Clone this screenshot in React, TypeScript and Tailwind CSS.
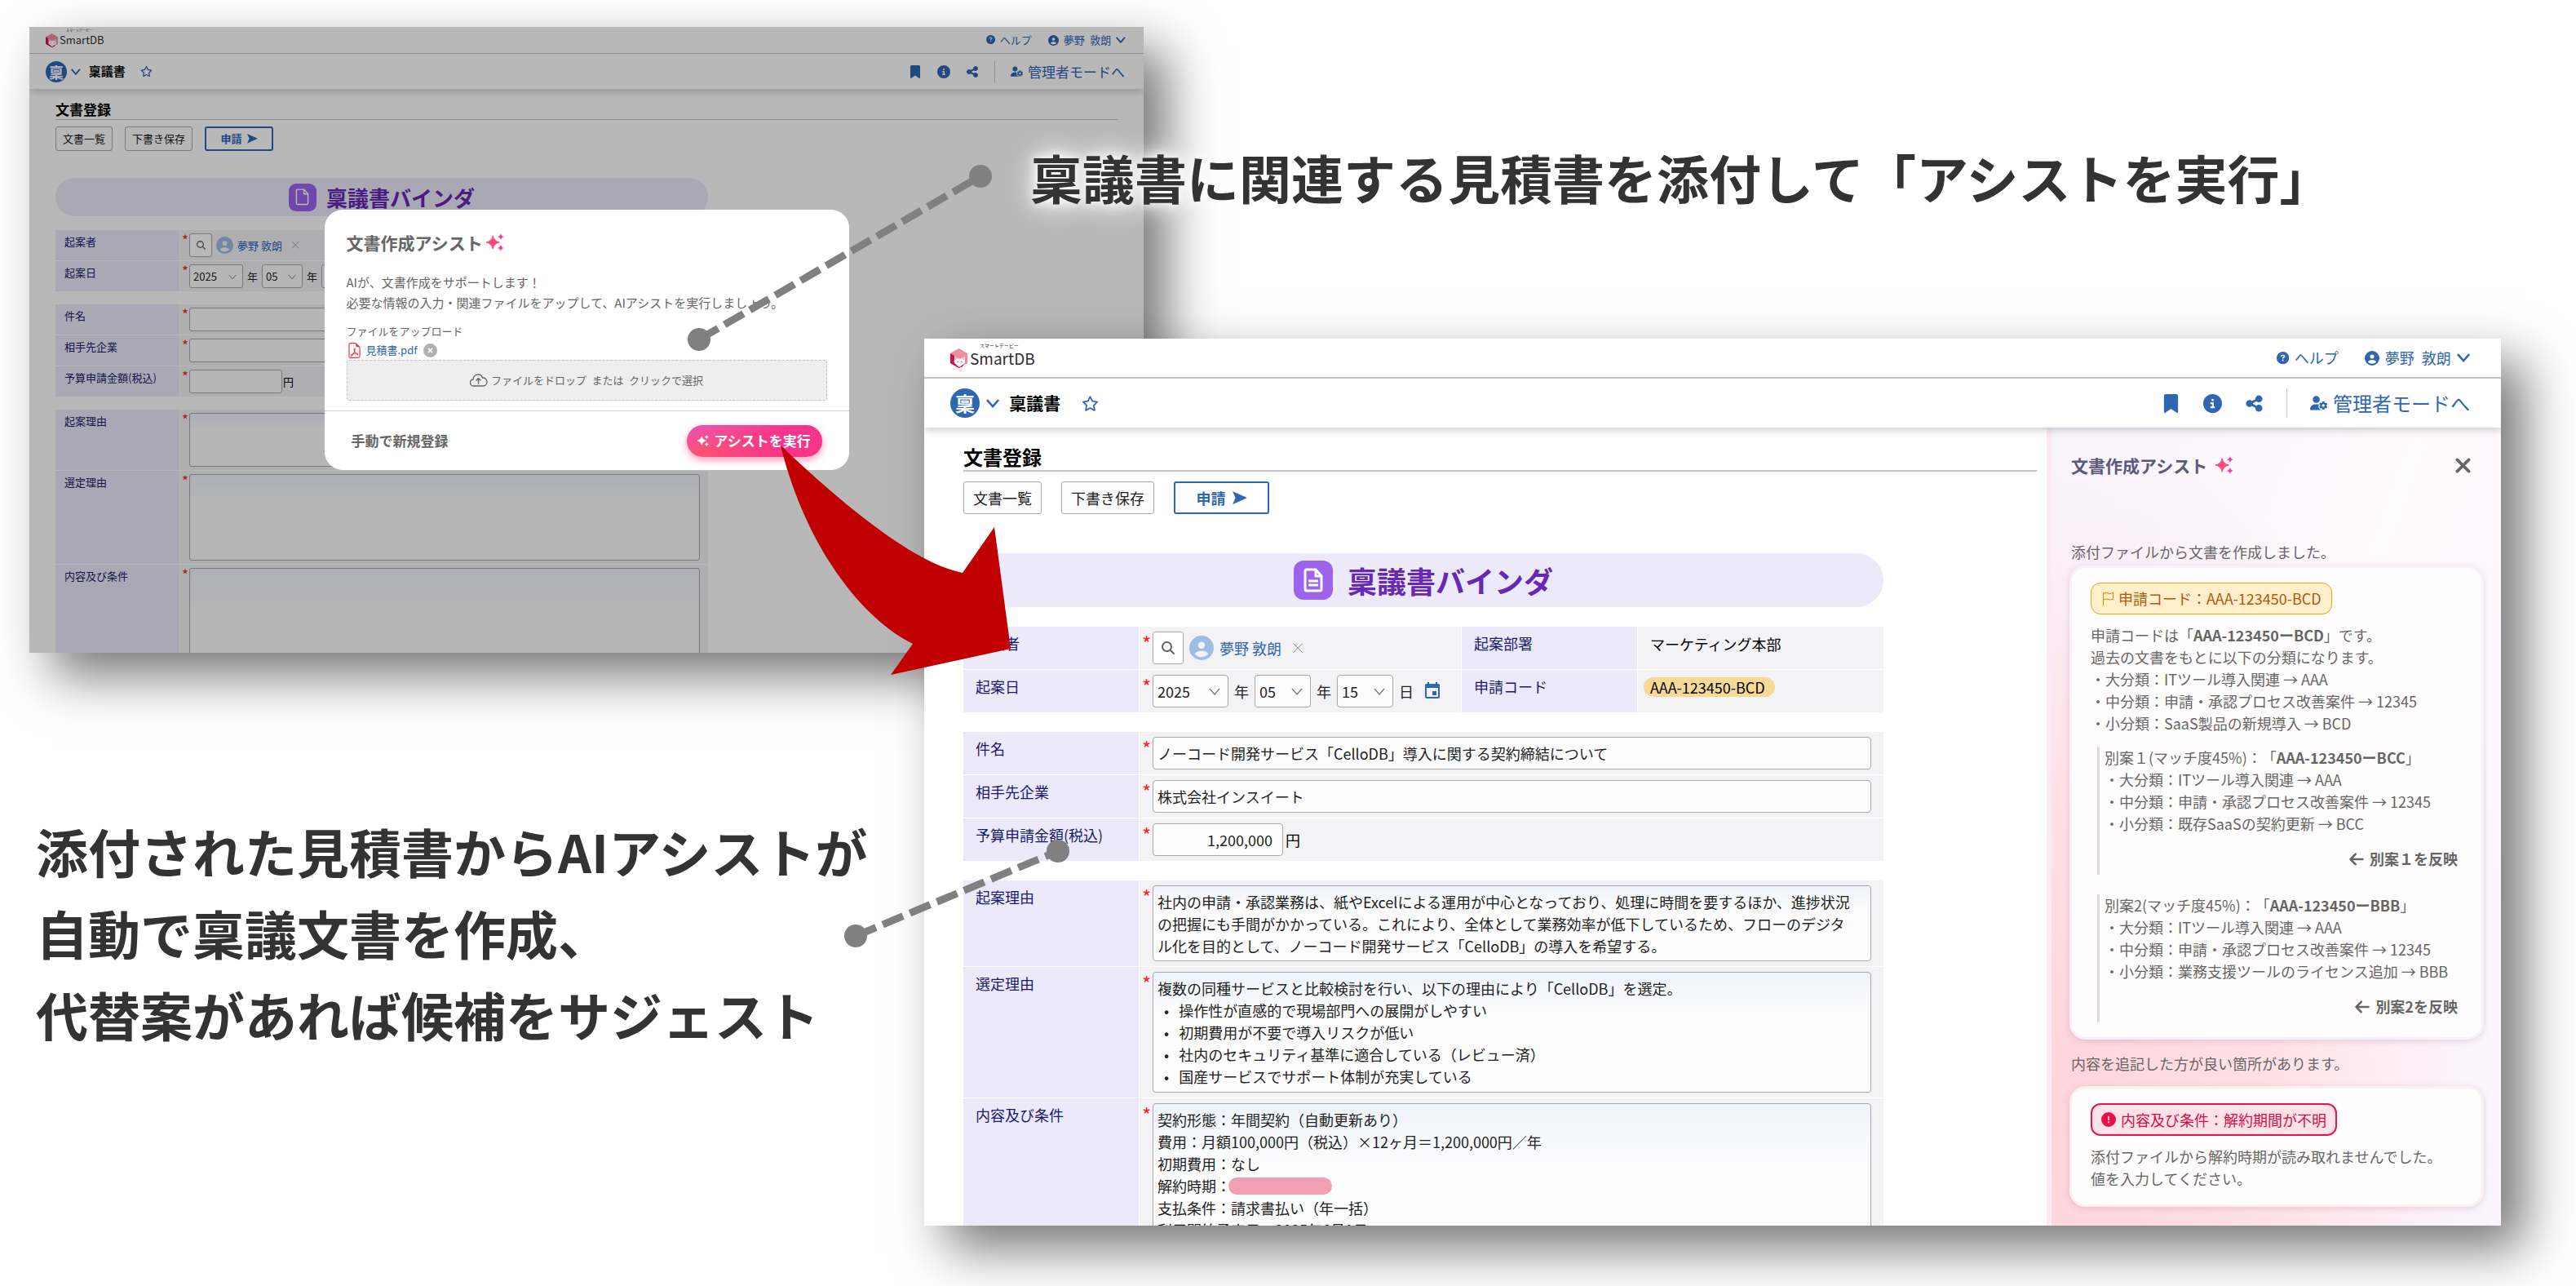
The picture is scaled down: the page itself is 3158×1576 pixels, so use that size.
import type { ReactNode } from "react";
import { clsx } from "clsx";
import { BsFileEarmarkPdf, BsFlag } from "react-icons/bs";
import {
  FaArrowLeft,
  FaBookmark,
  FaCircleExclamation,
  FaCircleInfo,
  FaCircleQuestion,
  FaCircleUser,
  FaCircleXmark,
  FaMagnifyingGlass,
  FaRegStar,
  FaShareNodes,
  FaUserGear,
} from "react-icons/fa6";
import { MdEvent } from "react-icons/md";

type Size = "sm" | "lg";

const sizes = {
  sm: {
    topBar: "h-[33px] border-b-1 pl-5 pr-[22px]",
    mark: "h-[17px] w-[15px]",
    ruby: "left-2 -top-1 text-[4px]",
    brand: "ml-0.5 text-[13px] leading-5",
    topLinks: "gap-5 text-[13px]",
    topLink: "gap-1.5",
    subBar: "h-[43px] pl-5 pr-[23px]",
    badge: "h-[26px] w-[26px] text-[18px]",
    binderMenu: "ml-[5px] text-[13px]",
    binderName: "ml-2.5 text-[15px]",
    star: "ml-[18px] text-[15px]",
    tools: "gap-[19px] text-base",
    divider: "h-[26px]",
    admin: "gap-1.5 text-[17px]",
    main: "pl-8 pr-[31px]",
    title: "pt-[13px] text-[17px] leading-6 border-b-1",
    actions: "mt-2 gap-[15px] text-[13px]",
    button: "h-[30px] px-2",
    submit: "h-[30px] w-[84px] gap-1.5",
    banner: "mt-[33px] h-[47px] gap-3 text-[26px]",
    bannerIcon: "h-[34px] w-[34px] rounded-[9px]",
    form: "w-[800px] text-[13px]",
    fourCols: "grid-cols-[152px_279px_152px_1fr]",
    twoCols: "grid-cols-[152px_1fr]",
    firstSection: "mt-[17px]",
    section: "mt-4",
    row: "min-h-[37px]",
    label: "px-[11px] py-1 leading-5",
    field: "gap-[5px] py-1 pl-[11px] pr-[10px]",
    required: "left-0.5 top-1 text-[17px] leading-4",
    text: "px-1.5 leading-5 pt-[13px]",
    control: "h-[29px] rounded-[3px] px-1",
    area: "rounded-[3px] p-1 leading-5",
    search: "h-[29px] w-[28px] text-[11px]",
    avatar: "text-[21px]",
    year: "w-[66px]",
    day: "w-[50px]",
    chevron: "right-2 h-2.5 w-2.5",
    calendar: "text-[18px]",
    amount: "w-[114px]",
  },
  lg: {
    topBar: "h-[49px] border-b-2 pl-8 pr-[38px]",
    mark: "h-6 w-[21px]",
    ruby: "left-3 -top-1.5 text-[6px]",
    brand: "ml-[3px] text-[19px] leading-6",
    topLinks: "gap-8 text-[18px]",
    topLink: "gap-[7px]",
    subBar: "h-[60px] pl-8 pr-[38px]",
    badge: "h-9 w-9 text-2xl",
    binderMenu: "ml-2 text-[18px]",
    binderName: "ml-3 text-[21px]",
    star: "ml-[26px] text-[21px]",
    tools: "gap-7 text-[23px]",
    divider: "h-9",
    admin: "gap-1.5 text-2xl",
    main: "pl-12 pr-3",
    title: "pt-5 text-2xl leading-8 border-b-2",
    actions: "mt-3 gap-6 text-[18px]",
    button: "h-10 px-[11px]",
    submit: "h-10 w-[117px] gap-2",
    banner: "mt-12 h-[66px] gap-[18px] text-4xl",
    bannerIcon: "h-12 w-12 rounded-xl",
    form: "w-[1128px] text-[18px]",
    fourCols: "grid-cols-[215px_394px_215px_1fr]",
    twoCols: "grid-cols-[215px_1fr]",
    firstSection: "mt-6",
    section: "mt-6",
    row: "min-h-[52px]",
    label: "px-[15px] py-[7px] leading-[27px]",
    field: "gap-[7px] py-1.5 pl-4 pr-[15px]",
    required: "left-[3px] top-2 text-[24px] leading-6",
    text: "pl-[15px] pt-2 leading-[27px]",
    control: "h-10 rounded-[4px] px-[5px]",
    area: "rounded-[4px] pl-[5px] pr-4 py-1.5 leading-[27px]",
    search: "h-10 w-[38px] text-base",
    avatar: "text-[30px]",
    year: "w-[93px]",
    day: "w-[69px]",
    chevron: "right-2.5 h-3.5 w-3.5",
    calendar: "text-2xl",
    amount: "w-[160px]",
  },
};

interface FormValues {
  subject: string;
  company: string;
  amount: string;
  reason: string;
  selection: string;
  terms: string;
}

const emptyForm: FormValues = { subject: "", company: "", amount: "", reason: "", selection: "", terms: "" };

const filledForm: FormValues = {
  subject: "ノーコード開発サービス「CelloDB」導入に関する契約締結について",
  company: "株式会社インスイート",
  amount: "1,200,000",
  reason:
    "社内の申請・承認業務は、紙やExcelによる運用が中心となっており、処理に時間を要するほか、進捗状況の把握にも手間がかかっている。これにより、全体として業務効率が低下しているため、フローのデジタル化を目的として、ノーコード開発サービス「CelloDB」の導入を希望する。",
  selection: [
    "複数の同種サービスと比較検討を行い、以下の理由により「CelloDB」を選定。",
    "  •   操作性が直感的で現場部門への展開がしやすい",
    "  •   初期費用が不要で導入リスクが低い",
    "  •   社内のセキュリティ基準に適合している（レビュー済）",
    "  •   国産サービスでサポート体制が充実している",
  ].join("\n"),
  terms: [
    "契約形態：年間契約（自動更新あり）",
    "費用：月額100,000円（税込）×12ヶ月＝1,200,000円／年",
    "初期費用：なし",
    "解約時期：",
    "支払条件：請求書払い（年一括）",
    "利用開始予定日：2025年6月1日",
  ].join("\n"),
};

function Sparkle({ className, plain }: { className: string; plain?: boolean }) {
  return (
    <svg viewBox="0 0 24 24" className={className} aria-hidden="true">
      <path d="M9 3q1.500 7.500 9 9-7.500 1.500-9 9-1.500-7.500-9-9 7.500-1.500 9-9z" fill={plain ? "#fff" : "#fb4b78"} stroke={plain ? "#fff" : "#fb4b78"} strokeLinejoin="round" />
      <path d="M19.500 0q.7 3.800 4.500 4.500-3.800.7-4.500 4.500-.7-3.800-4.500-4.500 3.800-.7 4.500-4.500z" fill={plain ? "#fff" : "#f23f9d"} />
      <path d="M19.500 15q.7 3.800 4.500 4.500-3.800.7-4.500 4.500-.7-3.800-4.500-4.500 3.800-.7 4.500-4.500z" fill={plain ? "#fff" : "#f23f9d"} />
    </svg>
  );
}

function BrandMark({ className }: { className: string }) {
  return (
    <svg viewBox="0 0 21 24" className={className} aria-hidden="true">
      <path d="M10.500 0 21 6v12l-10.500 6L0 18V6z" fill="#f08ca0" />
      <path d="M0 6l5 3v5l-1 2 6.500 8L0 18z" fill="#d0104c" />
      <path d="M5 9l4 3.500h4L18 10v8l-7 5-6-5z" fill="#fff" />
      <path d="M5 9l4 3.500L6 15zM18 10l-1 4.500-3-2z" fill="#f7b6c2" />
      <path d="M6 19l5 4 6-4-2.500 3.500L10.500 24z" fill="#d0104c" />
      <circle cx="9" cy="16.500" r="0.700" fill="#d0104c" />
      <circle cx="14" cy="16.500" r="0.700" fill="#d0104c" />
    </svg>
  );
}

function Chevron() {
  return (
    <svg viewBox="0 0 16 16" className="h-[0.9em] w-[0.9em]" fill="none" stroke="currentColor" strokeWidth="2.500" aria-hidden="true">
      <path d="M1 4l7 8 7-8" />
    </svg>
  );
}

function Close({ className, strokeWidth = 3 }: { className: string; strokeWidth?: number }) {
  return (
    <svg viewBox="0 0 16 16" className={className} fill="none" stroke="currentColor" strokeWidth={strokeWidth} strokeLinecap="round" aria-hidden="true">
      <path d="M2 2l12 12M14 2 2 14" />
    </svg>
  );
}

function WindowHeader({ size }: { size: Size }) {
  const s = sizes[size];
  return (
    <header className="relative z-10 shrink-0 bg-white shadow-[0_3px_10px_rgba(0,0,0,0.2)]">
      <div className={clsx("flex items-center justify-between border-[#c2c2c2]", s.topBar)}>
        <a href="#home" className="flex items-center text-[#2e2e2e]">
          <BrandMark className={s.mark} />
          <span className={clsx("relative", s.brand)}>
            <span className={clsx("absolute whitespace-nowrap leading-none", s.ruby)}>スマートデービー</span>
            SmartDB
          </span>
        </a>
        <nav className={clsx("flex items-center text-[#2f66b3]", s.topLinks)}>
          <a href="#help" className={clsx("flex items-center", s.topLink)}>
            <FaCircleQuestion className="h-[0.85em] w-[0.85em]" />
            ヘルプ
          </a>
          <button type="button" className={clsx("flex items-center", s.topLink)}>
            <FaCircleUser />
            <span>夢野&ensp;敦朗</span>
            <Chevron />
          </button>
        </nav>
      </div>
      <div className={clsx("flex items-center", s.subBar)}>
        <span className={clsx("flex items-center justify-center rounded-full bg-[#2f66b3] font-bold leading-none text-white", s.badge)}>稟</span>
        <button type="button" aria-label="バインダメニュー" className={clsx("text-[#2f66b3]", s.binderMenu)}>
          <Chevron />
        </button>
        <span className={clsx("font-bold text-black", s.binderName)}>稟議書</span>
        <button type="button" aria-label="お気に入り" className={clsx("text-[#2f66b3]", s.star)}>
          <FaRegStar />
        </button>
        <div className={clsx("ml-auto flex items-center text-[#2f66b3]", s.tools)}>
          <button type="button" aria-label="ブックマーク"><FaBookmark /></button>
          <button type="button" aria-label="情報"><FaCircleInfo /></button>
          <button type="button" aria-label="共有"><FaShareNodes /></button>
          <span className={clsx("w-px bg-[#c8c8c8]", s.divider)} />
          <a href="#admin" className={clsx("flex items-center", s.admin)}>
            <FaUserGear className="h-[0.9em] w-[0.9em]" />
            管理者モードへ
          </a>
        </div>
      </div>
    </header>
  );
}

function Label({ size, htmlFor, children }: { size: Size; htmlFor?: string; children: ReactNode }) {
  const className = clsx("block bg-[#ebe9fa] text-[#1b1a6d]", sizes[size].label);
  return htmlFor ? <label htmlFor={htmlFor} className={className}>{children}</label> : <div className={className}>{children}</div>;
}

function Field({ size, children }: { size: Size; children: ReactNode }) {
  const s = sizes[size];
  return (
    <div className={clsx("relative flex items-center bg-[#f3f3f6]", s.row, s.field)}>
      <span className={clsx("absolute text-[#f5222d]", s.required)}>*</span>
      {children}
    </div>
  );
}

function Select({ size, label, value, width }: { size: Size; label: string; value: string; width: string }) {
  const s = sizes[size];
  return (
    <span className={clsx("relative flex items-center", width)}>
      <select aria-label={label} defaultValue={value} className={clsx("w-full appearance-none border border-[#a8a8a8] bg-[#fcfcfd] text-[#222]", s.control)}>
        <option>{value}</option>
      </select>
      <svg viewBox="0 0 14 14" className={clsx("pointer-events-none absolute", s.chevron)} fill="none" stroke="#777" strokeWidth="1.300" aria-hidden="true">
        <path d="M1 4l6 7 6-7" />
      </svg>
    </span>
  );
}

function DocumentForm({ size, values }: { size: Size; values: FormValues }) {
  const s = sizes[size];
  const id = (name: string) => `${size}-${name}`;
  const control = "border border-[#a8a8a8] bg-[#fcfcfd] text-[#222]";
  const area = "block w-full resize-none overflow-hidden border border-[#a8a8a8] bg-linear-to-b from-[#eff3fb] to-[#fcfcfd] to-30% text-[#222]";

  return (
    <main className={clsx("min-w-0 flex-1", s.main)}>
      <h1 className={clsx("border-[#c6c6c6] font-bold text-black", s.title)}>文書登録</h1>
      <div className={clsx("flex text-[#222]", s.actions)}>
        <button type="button" className={clsx("rounded-[3px] border border-[#a8a8a8] bg-[#fcfcfd]", s.button)}>文書一覧</button>
        <button type="button" className={clsx("rounded-[3px] border border-[#a8a8a8] bg-[#fcfcfd]", s.button)}>下書き保存</button>
        <button type="button" className={clsx("flex items-center justify-center rounded-[3px] border-2 border-[#2f66b3] bg-white font-bold text-[#2f66b3]", s.submit)}>
          申請
          <svg viewBox="0 0 20 18" className="h-[0.9em] w-[1em]" fill="currentColor" aria-hidden="true">
            <path d="M0 0l20 9L0 18l4-9z" />
          </svg>
        </button>
      </div>

      <div className={s.form}>
        <div className={clsx("flex items-center justify-center rounded-full bg-[#ebe9fa] font-bold text-[#6728b4]", s.banner)}>
          <span className={clsx("flex items-center justify-center bg-[#9d63ea]", s.bannerIcon)}>
            <svg viewBox="0 0 24 30" className="h-2/3 w-1/2" fill="none" stroke="#fff" strokeWidth={size === "lg" ? 3 : 2} strokeLinejoin="round" aria-hidden="true">
              <path d="M4 2h11l7 8v16a2 2 0 0 1-2 2H4a2 2 0 0 1-2-2V4a2 2 0 0 1 2-2zM15 2v8h7" />
              {size === "lg" && <path d="M6 16h12M6 21h12" />}
            </svg>
          </span>
          稟議書バインダ
        </div>

        <section className={clsx("grid gap-px", s.fourCols, s.firstSection)}>
          <Label size={size}>起案者</Label>
          <Field size={size}>
            <button type="button" aria-label="ユーザー検索" className={clsx("flex items-center justify-center rounded-[3px] border border-[#a8a8a8] bg-white text-[#666]", s.search)}>
              <FaMagnifyingGlass />
            </button>
            <FaCircleUser className={clsx("text-[#9dbce6]", s.avatar)} />
            <a href="#user" className="text-[#2f66b3]">夢野 敦朗</a>
            <button type="button" aria-label="削除" className="px-1.5 text-[#777]">
              <Close className="h-[0.8em] w-[0.8em]" strokeWidth={1} />
            </button>
          </Field>
          <Label size={size}>起案部署</Label>
          <div className={clsx("bg-[#f3f3f6] text-black", s.text)}>マーケティング本部</div>

          <Label size={size}>起案日</Label>
          <Field size={size}>
            <Select size={size} label="年" value="2025" width={s.year} />
            年
            <Select size={size} label="月" value="05" width={s.day} />
            年
            <Select size={size} label="日" value="15" width={s.day} />
            日
            <button type="button" aria-label="カレンダー" className={clsx("pl-1 text-[#2f66b3]", s.calendar)}>
              <MdEvent />
            </button>
          </Field>
          <Label size={size}>申請コード</Label>
          <div className={clsx("bg-[#f3f3f6] text-black", s.text)}>
            {size === "lg" && <span className="-ml-2 inline-block rounded-full bg-[#f7da95] pl-2 pr-3 leading-6">AAA-123450-BCD</span>}
          </div>
        </section>

        <section className={clsx("grid gap-px", s.twoCols, s.section)}>
          <Label size={size} htmlFor={id("subject")}>件名</Label>
          <Field size={size}>
            <input id={id("subject")} type="text" defaultValue={values.subject} className={clsx("w-full", control, s.control)} />
          </Field>
          <Label size={size} htmlFor={id("company")}>相手先企業</Label>
          <Field size={size}>
            <input id={id("company")} type="text" defaultValue={values.company} className={clsx("w-full", control, s.control)} />
          </Field>
          <Label size={size} htmlFor={id("amount")}>予算申請金額(税込)</Label>
          <Field size={size}>
            <input id={id("amount")} type="text" defaultValue={values.amount} className={clsx("text-right", control, s.control, s.amount, size === "lg" && "pr-3")} />
            <span className="-ml-1 text-black">円</span>
          </Field>
        </section>

        <section className={clsx("grid gap-px", s.twoCols, s.section)}>
          <Label size={size} htmlFor={id("reason")}>起案理由</Label>
          <Field size={size}>
            <textarea id={id("reason")} defaultValue={values.reason} className={clsx(area, s.area, size === "lg" ? "h-[93px]" : "h-[66px]")} />
          </Field>
          <Label size={size} htmlFor={id("selection")}>選定理由</Label>
          <Field size={size}>
            <textarea id={id("selection")} defaultValue={values.selection} className={clsx(area, s.area, size === "lg" ? "h-[148px]" : "h-[106px]")} />
          </Field>
          <Label size={size} htmlFor={id("terms")}>内容及び条件</Label>
          <Field size={size}>
            <textarea id={id("terms")} defaultValue={values.terms} className={clsx(area, s.area, size === "lg" ? "h-[240px]" : "h-[160px]")} />
            {size === "lg" && <span className="absolute left-[109px] top-[97px] h-[21px] w-[127px] rounded-full bg-[#f19fb4]" />}
          </Field>
        </section>
      </div>
    </main>
  );
}

function AssistDialog() {
  return (
    <div className="absolute inset-0 z-20 flex items-center justify-center bg-black/28">
      <div role="dialog" aria-labelledby="assist-title" className="w-[643px] rounded-[22px] bg-white text-[#666]">
        <div className="px-[27px] pb-3 pt-6">
          <h2 id="assist-title" className="flex items-center gap-1 text-[21px] font-bold leading-8">
            文書作成アシスト
            <Sparkle className="h-[22px] w-[22px]" />
          </h2>
          <p className="mt-5 text-[15px] leading-[25px]">
            AIが、文書作成をサポートします！
            <br />
            必要な情報の入力・関連ファイルをアップして、AIアシストを実行しましょう。
          </p>
          <p className="mt-[13px] text-[13px] leading-5">ファイルをアップロード</p>
          <div className="mt-[3px] flex items-center text-[13px] leading-5">
            <BsFileEarmarkPdf className="h-[19px] w-[19px] text-[#ee3344]" />
            <a href="#file" className="ml-[5px] text-[#2f66b3]">見積書.pdf</a>
            <button type="button" aria-label="ファイルを削除" className="ml-2 text-[17px] text-[#b0b0b0]">
              <FaCircleXmark />
            </button>
          </div>
          <button type="button" className="mt-0.5 flex h-[50px] w-full items-center justify-center gap-1 rounded-[3px] border border-dashed border-[#c4c4c4] bg-[#eee] text-[13px]">
            <svg viewBox="0 0 22 16" className="h-4 w-[22px]" fill="none" stroke="currentColor" strokeWidth="1.400" strokeLinecap="round" strokeLinejoin="round" aria-hidden="true">
              <path d="M5 15a4 4 0 0 1-1-8C4 3 7 1 10 1c3.500 0 5 2 5.500 4 3-.5 5.500 2 5.500 5 0 2.800-2 5-5 5zM10.500 12V6M8 8l2.500-2.500L13 8" />
            </svg>
            ファイルをドロップ&ensp;または&ensp;クリックで選択
          </button>
        </div>
        <div className="flex h-[73px] items-center justify-between border-t border-[#d4d4d4] px-[33px]">
          <button type="button" className="text-[17px] font-bold">手動で新規登録</button>
          <button
            type="button"
            className="flex h-[39px] w-[166px] items-center justify-center gap-1.5 rounded-full bg-[linear-gradient(165deg,#ea4fb8_0%,transparent_45%),linear-gradient(75deg,#fb5870_0%,#f8338a_70%)] text-[17px] font-bold text-white shadow-[0_4px_8px_rgba(250,60,120,0.5)]"
          >
            <Sparkle className="h-3.5 w-3.5" plain />
            アシストを実行
          </button>
        </div>
      </div>
    </div>
  );
}

interface Alternative {
  title: string;
  code: string;
  items: string[];
  action: string;
}

const alternatives: Alternative[] = [
  {
    title: "別案１(マッチ度45%)：",
    code: "AAA-123450ーBCC",
    items: ["大分類：ITツール導入関連 → AAA", "中分類：申請・承認プロセス改善案件 → 12345", "小分類：既存SaaSの契約更新 → BCC"],
    action: "別案１を反映",
  },
  {
    title: "別案2(マッチ度45%)：",
    code: "AAA-123450ーBBB",
    items: ["大分類：ITツール導入関連 → AAA", "中分類：申請・承認プロセス改善案件 → 12345", "小分類：業務支援ツールのライセンス追加 → BBB"],
    action: "別案2を反映",
  },
];

function AssistPanel() {
  const card = "rounded-[20px] border-3 px-[23px] pb-[18px] pt-[18px] bg-[#fffdfd] shadow-[0_2px_8px_rgba(120,60,90,0.18)]";
  return (
    <aside className="w-[557px] shrink-0 border-l-6 border-[#fbeaf5] bg-[radial-gradient(ellipse_at_0%_88%,#ffd3dc_0%,#ffe1e8_35%,transparent_70%),linear-gradient(110deg,#f8f5ff_0%,#fffafb_50%,#faf5ff_100%)] pl-[22px] pr-[21px] text-[18px] leading-[27px] text-[#666]">
      <div className="flex items-center justify-between pl-0.5 pr-4 pt-[30px]">
        <h2 className="flex items-center gap-2.5 text-[21px] font-bold leading-8 text-[#5c5a7c]">
          文書作成アシスト
          <Sparkle className="h-[22px] w-[22px]" />
        </h2>
        <button type="button" aria-label="閉じる">
          <Close className="h-[19px] w-[19px]" />
        </button>
      </div>

      <p className="mt-[77px] pl-0.5">添付ファイルから文書を作成しました。</p>
      <div className={clsx("mt-[3px] border-[#f7f0fd]", card)}>
        <div className="flex h-[39px] w-fit items-center gap-[5px] rounded-xl border border-[#eba20c] bg-[#fff0cb] px-3 text-[#b4560d]">
          <BsFlag className="text-base text-[#f07f0a]" />
          申請コード：AAA-123450-BCD
        </div>
        <p className="mt-3">
          申請コードは「<b>AAA-123450ーBCD</b>」です。
          <br />
          過去の文書をもとに以下の分類になります。
        </p>
        <ul>
          <li>・大分類：ITツール導入関連 → AAA</li>
          <li>・中分類：申請・承認プロセス改善案件 → 12345</li>
          <li>・小分類：SaaS製品の新規導入 → BCD</li>
        </ul>
        {alternatives.map((item, index) => (
          <div key={item.code} className={clsx("ml-2 border-l-3 border-[#dcdcdf] pb-1.5 pl-1.5 pr-1.5", index === 0 ? "mt-[15px]" : "mt-6")}>
            <p>
              {item.title}「<b>{item.code}</b>」
            </p>
            <ul>
              {item.items.map((text) => (
                <li key={text}>・{text}</li>
              ))}
            </ul>
            <button type="button" className="ml-auto mt-4 flex items-center gap-1.5 font-bold">
              <FaArrowLeft className="text-[20px]" />
              {item.action}
            </button>
          </div>
        ))}
      </div>

      <p className="mt-4 pl-0.5">内容を追記した方が良い箇所があります。</p>
      <div className={clsx("mt-[14px] border-[#fdf1ef]", card)}>
        <div className="flex h-10 w-fit items-center gap-1.5 rounded-xl border-2 border-[#ea1550] bg-[#ffe3e9] px-[11px] text-[#d40d49]">
          <FaCircleExclamation className="text-[#ea0f45]" />
          内容及び条件：解約期間が不明
        </div>
        <p className="mt-3">
          添付ファイルから解約時期が読み取れませんでした。
          <br />
          値を入力してください。
        </p>
      </div>
    </aside>
  );
}

function AppWindow({ size, className, children }: { size: Size; className: string; children: ReactNode }) {
  return (
    <div className={clsx("absolute isolate shadow-[28px_28px_60px_rgba(0,0,0,0.54)]", className)}>
      <div className="relative flex h-full flex-col overflow-hidden bg-white">
        <WindowHeader size={size} />
        <div className="flex min-h-0 flex-1">{children}</div>
        {size === "sm" && <AssistDialog />}
      </div>
    </div>
  );
}

export default function App() {
  return (
    <div className="relative h-screen overflow-hidden bg-white font-['Noto_Sans_CJK_JP','Noto_Sans',sans-serif] text-[#222] [text-spacing-trim:space-all]">
      <AppWindow size="sm" className="left-9 top-[33px] h-[767px] w-[1366px]">
        <DocumentForm size="sm" values={emptyForm} />
      </AppWindow>

      <p className="absolute left-[1263px] top-[166px] whitespace-nowrap text-[64px] font-bold leading-[100px] text-[#333] [text-shadow:0_0_12px_#fff,0_0_24px_#fff,0_0_36px_#fff]">
        稟議書に関連する見積書を添付して「アシストを実行」
      </p>

      <AppWindow size="lg" className="bottom-[74px] left-[1133px] right-[92px] top-[415px]">
        <DocumentForm size="lg" values={filledForm} />
        <AssistPanel />
      </AppWindow>

      <p className="absolute left-11 top-[992px] whitespace-nowrap text-[64px] font-bold leading-[100px] text-[#333]">
        添付された見積書からAIアシストが
        <br />
        自動で稟議文書を作成、
        <br />
        代替案があれば候補をサジェスト
      </p>

      {/* callout leaders and the big arrow between the two windows */}
      <svg width="3158" height="1576" viewBox="0 0 3158 1576" className="pointer-events-none absolute left-0 top-0" aria-hidden="true">
        <g stroke="#808080" strokeWidth="9" strokeDasharray="27 9">
          <path d="M857 416 1202 216" />
          <path d="M1049 1147l248-104" />
        </g>
        <g fill="#808080">
          <circle cx="857" cy="416" r="14" />
          <circle cx="1202" cy="216" r="14" />
          <circle cx="1049" cy="1147" r="14" />
          <circle cx="1297" cy="1043" r="14" />
        </g>
        <path d="M957 546C1030 615 1118 690 1180 702L1219 646 1239 795 1092 827 1119 789C1050 755 985 660 957 546z" fill="#c00000" />
      </svg>
    </div>
  );
}
